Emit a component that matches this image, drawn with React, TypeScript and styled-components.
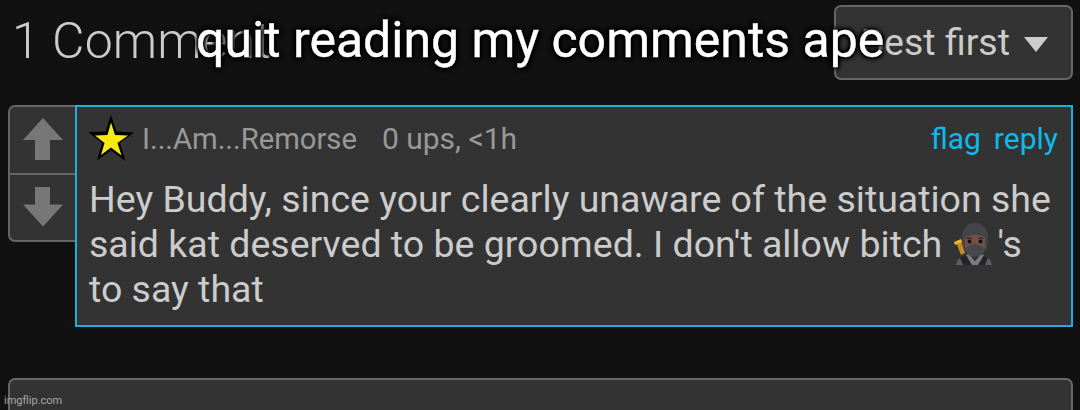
import styled, { createGlobalStyle } from "styled-components";

const GlobalStyle = createGlobalStyle`
  * {
    box-sizing: border-box;
  }

  body {
    margin: 0;
    background-color: #111;
    color: #ccc;
    font-family: Roboto, "Liberation Sans", sans-serif;
    overflow: hidden;
  }
`;

const Page = styled.main`
  position: relative;
  height: 410px;
  padding: 5px 7px 0 8px;
  overflow: hidden;
`;

const Header = styled.header`
  display: flex;
  justify-content: space-between;
  height: 75px;
`;

const Title = styled.h1`
  margin: 0;
  padding-left: 4px;
  font-size: 50px;
  font-weight: 300;
  line-height: 72px;
  letter-spacing: 0.1px;
  white-space: nowrap;
`;

const SortButton = styled.button`
  display: flex;
  align-items: center;
  justify-content: flex-end;
  width: 239px;
  height: 75px;
  padding: 0 23px 1px 0;
  border: 2px solid #666;
  border-radius: 7px;
  background-color: #333;
  color: #ccc;
  font-family: inherit;
  font-size: 37.5px;
  white-space: nowrap;
`;

const Caret = styled.span`
  margin: 5px 0 0 14px;
  border: 12px solid transparent;
  border-top: 15px solid #ccc;
  border-bottom: 0;
`;

const Caption = styled.p`
  position: absolute;
  top: 4px;
  left: 196px;
  margin: 0;
  color: #fff;
  font-size: 50px;
  line-height: 72px;
  white-space: nowrap;
  -webkit-text-stroke: 0.4px #fff;
  text-shadow: 0 0 2px #000, 0 0 4px #000, 0 0 5px #000, 1px 1px 5px #000, -1px -1px 5px #000;
`;

const Comment = styled.article`
  display: flex;
  align-items: flex-start;
  margin-top: 25px;
`;

const Votes = styled.div`
  width: 67px;
  height: 137px;
  border: 2px solid #666;
  border-right: 0;
  border-radius: 7px 0 0 7px;
  background-color: #333;
`;

const VoteButton = styled.button<{ $down?: boolean }>`
  display: flex;
  justify-content: center;
  width: 100%;
  height: ${(props) => (props.$down ? "65px" : "68px")};
  padding: ${(props) => (props.$down ? "12px" : "11px")} 0 0;
  border: 0;
  border-bottom: ${(props) => (props.$down ? "0" : "2px solid #666")};
  background: none;
`;

const Body = styled.div`
  width: 998px;
  height: 222px;
  padding: 8px 13px 0 12px;
  border: 2px solid #1fafd9;
  background-color: #333;
`;

const Meta = styled.div`
  display: flex;
  align-items: center;
  height: 46px;
  color: #999;
  font-size: 30px;
  white-space: nowrap;
`;

const User = styled.span`
  margin: 2px 25px 0 7px;
  font-size: 29.2px;
`;

const Links = styled.div`
  display: flex;
  gap: 13px;
  margin-left: auto;
`;

const TextLink = styled.a`
  color: #0fb9ec;
`;

const Message = styled.p`
  margin: 16px 0 0;
  font-size: 37.5px;
  line-height: 45px;
  white-space: nowrap;
`;

const Emoji = styled.svg`
  margin: 0 3px;
  vertical-align: -9px;
`;

const NextBox = styled.section`
  height: 60px;
  margin-top: 51px;
  border: 2px solid #666;
  border-radius: 7px;
  background-color: #333;
`;

const Watermark = styled.small`
  position: absolute;
  bottom: 2px;
  left: 4px;
  color: #a8a8a8;
  font-size: 11px;
  line-height: 14px;
`;

const ArrowIcon = ({ down }: { down?: boolean }) => (
  <svg width="40" height="43" viewBox="0 0 40 43">
    <path
      fill="#777"
      d={down ? "M12 0H27V17.5H40L20 39.5L0 17.5H12Z" : "M20 0L40 22H27V42H12V22H0Z"}
    />
  </svg>
);

const StarIcon = () => (
  <svg width="46" height="46" viewBox="0 0 46 46">
    <path fill="#000" d="M22 0L27.5 16.5L45 17.5L31 28L36.5 46L22 35.5L8 45.5L13 28L-1 17L16.5 16.5Z" />
    <path fill="#f5e90f" d="M22 7.5L26 20L39 20.5L28.5 28L32.5 40.5L22 32.5L12 40L15.500 28L6 20.500L18.500 20Z" />
  </svg>
);

const NinjaIcon = () => (
  <Emoji width="40" height="43" viewBox="0 0 40 43">
    <path fill="#c68c20" d="M2 19L7 17L11 30L7 32Z" />
    <path fill="#f0b429" d="M0 19L7 16L8 19L1 22Z" />
    <path fill="#252527" d="M2 42C3 35 9 32 20 32S37 35 38 42Z" />
    <path fill="#5c6063" d="M2 42C3 38 4 36 6 35L9 42ZM38 42C37 38 36 36 34 35L31 42Z" />
    <path fill="#7b7e81" d="M12 32L15 31L21 38L27 31L30 32L24 42H18Z" />
    <path fill="#303134" d="M14 30H28L21 38Z" />
    <path fill="#434649" d="M21 0C12 0 7.500 7 8 17C8 27 13 33 21 33S34 27 34 17C34.500 7 30 0 21 0Z" />
    <path fill="#735148" d="M11 15C15 11 27 11 31 15V26H11Z" />
    <path fill="#46494b" d="M11 25C14 24 17 21 21 21S28 24 31 25C30 30 27 34 21 34S12 30 11 25Z" />
    <circle cx="15.500" cy="18.500" r="2" fill="#17110f" />
    <circle cx="26.500" cy="18.500" r="2" fill="#17110f" />
    <path fill="none" stroke="#211817" d="M12.500 15.500Q15 14 17.500 15.500M24.500 15.500Q27 14 29.500 15.500" />
  </Emoji>
);

const App = () => {
  return (
    <Page>
      <GlobalStyle />
      <Header>
        <Title>1 Comment</Title>
        <SortButton>
          Best first
          <Caret />
        </SortButton>
      </Header>

      <Comment>
        <Votes>
          <VoteButton>
            <ArrowIcon />
          </VoteButton>
          <VoteButton $down>
            <ArrowIcon down />
          </VoteButton>
        </Votes>
        <Body>
          <Meta>
            <StarIcon />
            <User>I...Am...Remorse</User>
            <span>0 ups, &lt;1h</span>
            <Links>
              <TextLink>flag</TextLink>
              <TextLink>reply</TextLink>
            </Links>
          </Meta>
          <Message>
            Hey Buddy, since your clearly unaware of the situation she
            <br />
            said kat deserved to be groomed. I don't allow bitch <NinjaIcon />
            's
            <br />
            to say that
          </Message>
        </Body>
      </Comment>

      <NextBox />

      <Caption>quit reading my comments ape</Caption>
      <Watermark>imgflip.com</Watermark>
    </Page>
  );
};

export default App;
